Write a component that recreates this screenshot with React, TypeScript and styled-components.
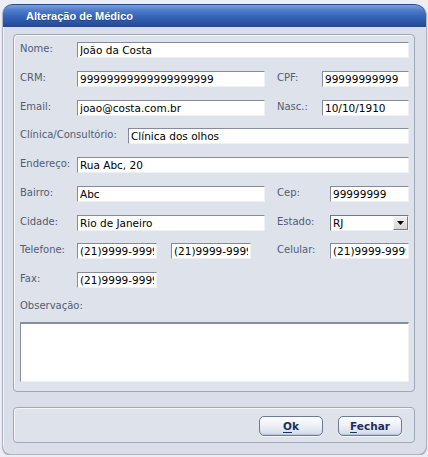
import React from "react";
import styled, { createGlobalStyle } from "styled-components";

const Global = createGlobalStyle`
  html, body { margin: 0; padding: 0; background: #eceef3; }
  body { font-family: "DejaVu Sans", Verdana, sans-serif; }
  * { box-sizing: border-box; }
`;

const Window = styled.div`
  margin: 4px 1px 0 2px;
  background: #d9dee8;
  border: 1px solid #aeb6c6;
  border-top: none;
  border-radius: 10px 12px 9px 9px;
  overflow: hidden;
  box-shadow: 0 1px 1px rgba(60, 70, 90, 0.45), inset 1px 0 0 #eef1f6;
`;

const TitleBar = styled.div`
  height: 23px;
  margin: 0 -1px;
  display: flex;
  align-items: center;
  padding-left: 23px;
  background: linear-gradient(
    to bottom,
    #7f9fdb 0%,
    #4f7cca 25%,
    #3564b8 55%,
    #2b57a6 80%,
    #234a90 100%
  );
  border: 1px solid #284a8c;
  border-radius: 10px 12px 0 0;
  color: #ffffff;
  font-family: "Liberation Sans", Arial, sans-serif;
  font-weight: bold;
  font-size: 11px;
  text-shadow: 0 1px 0 rgba(20, 40, 90, 0.5);
`;

const Body = styled.div`
  padding: 7px 11px 11px 10px;
  display: flex;
  flex-direction: column;
  gap: 15px;
`;

const Panel = styled.div`
  background: #dee2eb;
  border: 1px solid #9ea7b7;
  border-radius: 4px;
  box-shadow: inset 1px 1px 0 #f3f5f9;
  padding: 7px 5px 9px 6px;
  display: flex;
  flex-direction: column;
`;

const Rows = styled.div`
  display: flex;
  flex-direction: column;
  gap: 12.75px;
`;

const Row = styled.div`
  display: flex;
  align-items: center;
  height: 16px;
`;

const Label = styled.label<{ $w: number; $ml?: number }>`
  width: ${(p) => p.$w}px;
  margin-left: ${(p) => p.$ml ?? 0}px;
  flex: none;
  font-size: 10px;
  color: #535d72;
  white-space: nowrap;
  line-height: 16px;
  margin-top: -2px;
`;

const Field = styled.input<{ $w?: number; $ml?: number }>`
  ${(p) => (p.$w ? `width: ${p.$w}px; flex: none;` : `flex: 1; min-width: 0;`)}
  margin: 0 0 0 ${(p) => p.$ml ?? 0}px;
  height: 16px;
  padding: 0 2px;
  background: #ffffff;
  border-style: solid;
  border-width: 1px;
  border-color: #848c9c #eef0f4 #eef0f4 #848c9c;
  font-family: "DejaVu Sans", Verdana, sans-serif;
  font-size: 10.5px;
  color: #000;
  outline: none;
`;

const SelectBox = styled.div<{ $w: number }>`
  width: ${(p) => p.$w}px;
  height: 16px;
  flex: none;
  display: flex;
  align-items: center;
  background: #ffffff;
  border-style: solid;
  border-width: 1px;
  border-color: #6f7686 #eef0f4 #eef0f4 #6f7686;
  padding-left: 2px;
  font-size: 10.5px;
  color: #000;
`;

const SelectText = styled.span`
  flex: 1;
`;

const ArrowBtn = styled.div`
  width: 15px;
  height: 14px;
  display: flex;
  align-items: center;
  justify-content: center;
  background: linear-gradient(to bottom, #f0f0f0, #d6d6d6);
  border: 1px solid;
  border-color: #f7f7f7 #7d7d7d #7d7d7d #f7f7f7;
`;

const ObsLabel = styled.div`
  margin-top: 10px;
  height: 16px;
  line-height: 16px;
  font-size: 10px;
  color: #535d72;
`;

const TextArea = styled.textarea`
  margin-top: 8px;
  height: 60px;
  width: 100%;
  resize: none;
  background: #ffffff;
  border-style: solid;
  border-width: 2px 1px 1px 1px;
  border-color: #868fa1 #eef0f4 #eef0f4 #868fa1;
  outline: none;
  font-family: "DejaVu Sans", Verdana, sans-serif;
  font-size: 10px;
`;

const Footer = styled.div`
  height: 36px;
  background: #dee2eb;
  border: 1px solid #9ea7b7;
  border-radius: 4px;
  box-shadow: inset 1px 1px 0 #f3f5f9;
  display: flex;
  align-items: center;
  justify-content: flex-end;
  gap: 15px;
  padding: 1px 12px 0 0;
`;

const Button = styled.button`
  width: 64px;
  height: 20px;
  border: 1px solid #6d7b95;
  border-radius: 5px;
  background: linear-gradient(to bottom, #fbfcfe 0%, #eef1f7 45%, #d3dae7 100%);
  box-shadow: inset 0 -1px 0 #bcc5d5, 0 1px 0 #f4f6fa;
  font-family: "DejaVu Sans", Verdana, sans-serif;
  font-weight: bold;
  font-size: 10.5px;
  color: #1c2d63;
  padding: 0;
  cursor: pointer;
  u { text-decoration-thickness: 1px; text-underline-offset: 2px; }
`;

export default function App() {
  return (
    <>
      <Global />
      <Window>
        <TitleBar>Alteração de Médico</TitleBar>
        <Body>
          <Panel>
            <Rows>
              <Row>
                <Label $w={57}>Nome:</Label>
                <Field defaultValue="João da Costa" />
              </Row>
              <Row>
                <Label $w={57}>CRM:</Label>
                <Field $w={188} defaultValue="99999999999999999999" />
                <Label $w={45} $ml={12}>CPF:</Label>
                <Field $w={87} defaultValue="99999999999" />
              </Row>
              <Row>
                <Label $w={57}>Email:</Label>
                <Field $w={188} defaultValue="joao@costa.com.br" />
                <Label $w={45} $ml={12}>Nasc.:</Label>
                <Field $w={87} defaultValue="10/10/1910" />
              </Row>
              <Row>
                <Label $w={108}>Clínica/Consultório:</Label>
                <Field defaultValue="Clínica dos olhos" />
              </Row>
              <Row>
                <Label $w={57}>Endereço:</Label>
                <Field defaultValue="Rua Abc, 20" />
              </Row>
              <Row>
                <Label $w={57}>Bairro:</Label>
                <Field $w={188} defaultValue="Abc" />
                <Label $w={53} $ml={12}>Cep:</Label>
                <Field $w={79} defaultValue="99999999" />
              </Row>
              <Row>
                <Label $w={57}>Cidade:</Label>
                <Field $w={188} defaultValue="Rio de Janeiro" />
                <Label $w={53} $ml={12}>Estado:</Label>
                <SelectBox $w={79}>
                  <SelectText>RJ</SelectText>
                  <ArrowBtn>
                    <svg width="7" height="4" viewBox="0 0 7 4">
                      <polygon points="0,0 7,0 3.5,4" fill="#000" />
                    </svg>
                  </ArrowBtn>
                </SelectBox>
              </Row>
              <Row>
                <Label $w={57}>Telefone:</Label>
                <Field $w={80} defaultValue="(21)9999-9999" />
                <Field $w={80} $ml={14} defaultValue="(21)9999-9999" />
                <Label $w={53} $ml={26}>Celular:</Label>
                <Field $w={79} defaultValue="(21)9999-9999" />
              </Row>
              <Row>
                <Label $w={57}>Fax:</Label>
                <Field $w={80} defaultValue="(21)9999-9999" />
              </Row>
            </Rows>
            <ObsLabel>Observação:</ObsLabel>
            <TextArea />
          </Panel>
          <Footer>
            <Button><u>O</u>k</Button>
            <Button><u>F</u>echar</Button>
          </Footer>
        </Body>
      </Window>
    </>
  );
}
